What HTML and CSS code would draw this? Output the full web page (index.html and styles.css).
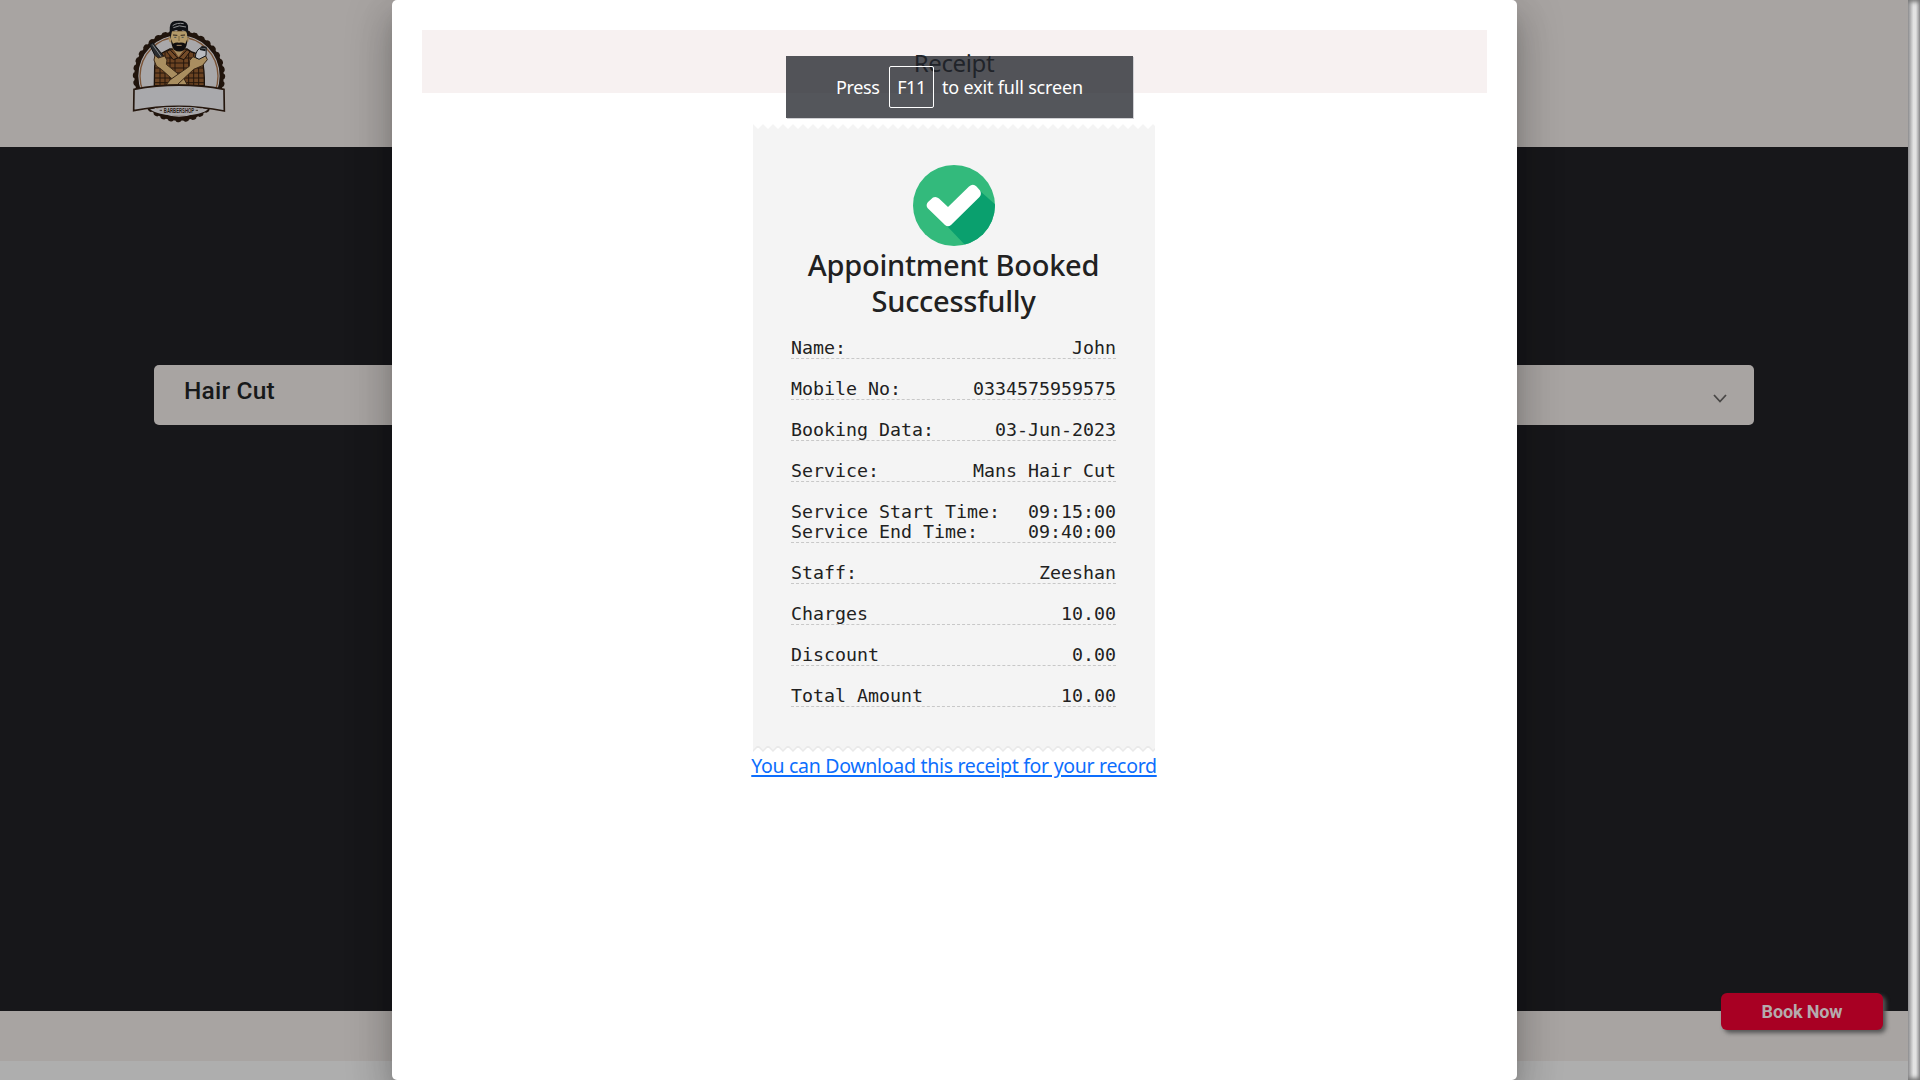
FILE: index.html
```html
<!DOCTYPE html>
<html lang="en">
<head>
<meta charset="utf-8">
<title>Barbershop booking</title>
<link rel="stylesheet" href="styles.css">
</head>
<body>
<div class="viewport">
  <div class="page">
    <header class="site-header">
      <svg class="logo" viewBox="60 25 300 320" aria-label="Barbershop">
        <circle cx="207" cy="199" r="128" fill="#a9a8aa" stroke="#20140c" stroke-width="12"/>
        <circle cx="207" cy="199" r="131" fill="none" stroke="#20140c" stroke-width="15" stroke-linecap="round" stroke-dasharray="3 19.86"/>
        <circle cx="207" cy="199" r="117" fill="none" stroke="#7b5437" stroke-width="4"/>
        <path d="M179 118 L160 128 Q137 136 134 170 L133 228 H283 Q284 180 276 150 Q268 132 245 127 L231 118 Z" fill="#6b4322" stroke="#1b120b" stroke-width="4"/>
        <path d="M150 134V228M165 127V228M180 124V228M195 132V228M221 132V228M236 126V228M251 130V228M266 140V228M136 145H276M134 160H279M133 175H281M133 190H282M133 205H283M133 219H283" stroke="#25170c" stroke-width="3"/>
        <path d="M185 112 L206 142 L228 112 Z" fill="#a58a5d"/>
        <path d="M180 120 L203 145 L190 150 L170 126 ZM231 120 L208 145 L222 150 L240 126 Z" fill="#744b28" stroke="#1b120b" stroke-width="3"/>
        <path d="M182 65 L181 90 Q190 122 207 124 Q226 120 232 90 L232 65 Z" fill="#b39a69"/>
        <path d="M180 84 L175 81 L178 96 L184 99 M233 84 L238 81 L235 96 L229 99" fill="#a98d5e"/>
        <path d="M179 66 Q177 36 194 34 Q229 29 234 48 L235 87 L231 72 L228 65 Q207 57 186 65 L184 74 L181 88 Z" fill="#101216"/>
        <path d="M188 48 Q201 38 221 42M190 54 Q207 44 228 52" fill="none" stroke="#8f9193" stroke-width="3"/>
        <path d="M183 88 L189 102 Q198 97 207 99 Q218 97 226 102 L232 88 Q232 112 221 122 Q207 130 193 121 Q184 111 183 88 Z" fill="#100e0e"/>
        <path d="M200 107 H215" stroke="#a58b69" stroke-width="3"/>
        <path d="M189 76 L202 77M212 77 L225 76" stroke="#2c2119" stroke-width="3"/>
        <path d="M193 83H199M215 83H221" stroke="#435055" stroke-width="3"/>
        <path d="M207 79V94" stroke="#7d673f" stroke-width="3"/>
        <path d="M119 105 L128 99 L163 142 L153 150 L136 140 Z" fill="#292c2f" stroke="#101214" stroke-width="3"/>
        <path d="M128 105 L154 142" stroke="#85898b" stroke-width="3"/>
        <path d="M135 137 L145 145 L164 139 L171 151 L169 164 L222 207 L232 226 L207 226 L154 179 L139 169 L132 151 Z" fill="#a98e60" stroke="#382616" stroke-width="3"/>
        <path d="M249 141 L264 147 L287 139 L292 150 L277 168 L251 179 L202 225 L168 226 L181 210 L238 170 L239 152 Z" fill="#a98e60" stroke="#382616" stroke-width="3"/>
        <path d="M256 143 Q257 120 276 112 L289 114 L288 138 L267 149 Z" fill="#babcc0" stroke="#15181a" stroke-width="3"/>
        <path d="M270 118 L287 122M274 112 L289 114" stroke="#181b1e" stroke-width="6"/>
        <path d="M72 239 Q207 214 342 239 L343 304 Q207 276 71 303 Z" fill="#a9a9ac" stroke="#25170e" stroke-width="5"/>
        <path d="M120 299 Q207 284 294 299 Q279 316 207 318 Q139 316 120 299Z" fill="#a9a8aa"/>
        <text x="207" y="311" class="logo-text" textLength="91" lengthAdjust="spacingAndGlyphs">BARBERSHOP</text>
        <path d="M149 302h7M257 302h7" stroke="#443329" stroke-width="3"/>
      </svg>
    </header>
    <main class="services">
      <div class="service-select">
        <span class="service-name">Hair Cut</span>
        <svg class="chevron" viewBox="0 0 14 9"><path d="M1 1 L7 7.5 L13 1" fill="none" stroke="#494746" stroke-width="1.8"/></svg>
      </div>
    </main>
    <section class="footer-band"></section>
    <footer class="footer-base"></footer>
  </div>
  <div class="scrollbar"></div>

  <button class="book-now">Book Now</button>

  <div class="dialog">
    <div class="dialog-title">Receipt</div>
    <div class="receipt-area">
      <div class="receipt">
        <svg class="edge edge-top" width="402" height="5"><defs><pattern id="teeth-top" width="10" height="5" patternUnits="userSpaceOnUse"><path d="M-5 5 L0 0 L5 5 L10 0 L15 5Z" fill="#f4f4f4"/></pattern></defs><rect width="402" height="5" fill="url(#teeth-top)"/></svg>
        <div class="paper">
          <svg class="check" viewBox="0 0 82 81" preserveAspectRatio="none">
            <defs><clipPath id="disc"><ellipse cx="41" cy="40.5" rx="41" ry="40.5"/></clipPath></defs>
            <ellipse cx="41" cy="40.5" rx="41" ry="40.5" fill="#33ba7c"/>
            <path d="M67 26 L84 41 V82 H54 L33 60 Z" fill="#0aa06e" clip-path="url(#disc)"/>
            <path d="M15 37 L20 32.5 Q23 31 26 33.5 L35 42 L56 21.5 Q60 18 63.5 21.5 L67 25.5 Q69 29 66.5 32 L38 60 Q35 62.5 32 60 L14.5 43 Q12.5 40 15 37Z" fill="#fff"/>
          </svg>
          <h1 class="receipt-heading">Appointment Booked<br>Successfully</h1>
          <div class="rows">
            <div class="row"><span>Name:</span><span>John</span></div>
            <div class="row"><span>Mobile No:</span><span>0334575959575</span></div>
            <div class="row"><span>Booking Data:</span><span>03-Jun-2023</span></div>
            <div class="row"><span>Service:</span><span>Mans Hair Cut</span></div>
            <div class="row"><span>Service Start Time:<br>Service End Time:</span><span>09:15:00<br>09:40:00</span></div>
            <div class="row"><span>Staff:</span><span>Zeeshan</span></div>
            <div class="row"><span>Charges</span><span>10.00</span></div>
            <div class="row"><span>Discount</span><span>0.00</span></div>
            <div class="row"><span>Total Amount</span><span>10.00</span></div>
          </div>
        </div>
        <svg class="edge edge-bottom" width="402" height="7"><defs><pattern id="teeth-bottom" width="10" height="7" patternUnits="userSpaceOnUse"><path d="M-5 0 L0 5 L5 0 L10 5 L15 0Z" fill="#f4f4f4"/><path d="M-5 0 L0 5 L5 0 L10 5 L15 0" fill="none" stroke="#e9e9e9" stroke-width="1.5"/></pattern></defs><rect width="402" height="7" fill="url(#teeth-bottom)"/></svg>
      </div>
      <a class="download" href="#">You can Download this receipt for your record</a>
    </div>
  </div>

  <div class="fullscreen-hint"><span class="hint-press">Press</span><kbd>F11</kbd><span class="hint-rest">to exit full screen</span></div>
</div>
</body>
</html>
```
FILE: styles.css
```css
* { box-sizing: border-box; }
body { margin: 0; font-family: "Noto Sans", "Open Sans", sans-serif; color: #212529; }
.viewport { position: relative; display: grid; grid-template-columns: 1fr 12px; width: 1920px; height: 1080px; overflow: hidden; }
.page { display: grid; grid-template-rows: 147px 864px 50px 19px; }
.site-header { background: #a8a4a2; padding: 18px 0 0 130px; }
.logo { display: block; width: 100px; height: 106.7px; }
.logo-text { font: bold 20px "Liberation Sans", sans-serif; fill: #2a1d15; text-anchor: middle; }
.services { background: #17171a; padding: 218px 154px 0; }
.service-select { display: flex; justify-content: space-between; height: 60px; padding: 9px 27px 0 30px; border-radius: 5px; background: #a8a4a2; }
.service-name { font: 500 24.5px/33px Roboto, sans-serif; color: #17191a; letter-spacing: 0.2px; }
.chevron { width: 14px; height: 9px; margin-top: 20px; }
.footer-band { background: #a8a4a2; }
.footer-base { background: #aeaeae; }
.scrollbar { background: linear-gradient(90deg, #98989b, #bdbdbe 25%, #e2e2e2 45%, #e2e2e2 65%, #aaaaac 90%, #8c8c8e); box-shadow: inset 0 4px 4px -2px #777, inset 0 -4px 4px -2px #777; }
.book-now { position: absolute; left: 1721px; top: 993px; width: 162px; height: 37px; padding: 0; border: 0; border-radius: 6px; background: #a80023; color: #b5abad; font: 700 18px/37px Roboto, sans-serif; letter-spacing: -0.15px; box-shadow: 3px 3px 4px #555; }
.dialog { position: absolute; left: 392px; top: 0; width: 1125px; height: 1080px; padding: 30px; border-radius: 5px; background: #fff; box-shadow: 0 11px 15px -7px rgba(0,0,0,.2), 0 24px 38px 3px rgba(0,0,0,.14), 0 9px 46px 8px rgba(0,0,0,.12); }
.dialog-title { height: 63px; padding-right: 1px; background: #f7f1f1; text-align: center; font-size: 24px; line-height: 66px; letter-spacing: -0.4px; }
.receipt-area { display: flex; flex-direction: column; align-items: center; padding: 31px 1px 0 0; }
.receipt { width: 402px; }
.edge { display: block; }
.paper { display: flex; flex-direction: column; align-items: center; height: 617px; padding: 36px 39px 0 38px; background: #f4f4f4; }
.check { width: 82px; height: 81px; }
.receipt-heading { margin: 1px 0 0; text-align: center; white-space: nowrap; font-weight: 500; font-size: 29px; line-height: 36px; letter-spacing: -0.25px; color: #212121; }
.rows { align-self: stretch; display: flex; flex-direction: column; gap: 20px; margin-top: 19px; font: 18.27px/20px "DejaVu Sans Mono", monospace; color: #212121; }
.row { display: flex; justify-content: space-between; border-bottom: 1px dashed #c8c8c8; }
.download { margin-top: -1px; font-size: 19.5px; line-height: 27px; letter-spacing: -0.3px; color: #0d6efd; white-space: nowrap; text-decoration-thickness: 2px; text-underline-offset: 2px; }
.fullscreen-hint { position: absolute; left: 786px; top: 56px; width: 347px; height: 62px; display: flex; align-items: center; padding-left: 50px; background: rgba(32,35,41,.77); box-shadow: 1px 1px 0 #d0d0d4; color: #fff; font-size: 18px; white-space: nowrap; }
kbd { width: 45px; height: 42px; margin: 0 8px 0 9px; border: 1.5px solid #fff; border-radius: 2px; font: inherit; letter-spacing: -0.5px; text-align: center; line-height: 40px; }
.hint-press { width: 44px; letter-spacing: -0.4px; }
.hint-rest { letter-spacing: -0.18px; }
```
